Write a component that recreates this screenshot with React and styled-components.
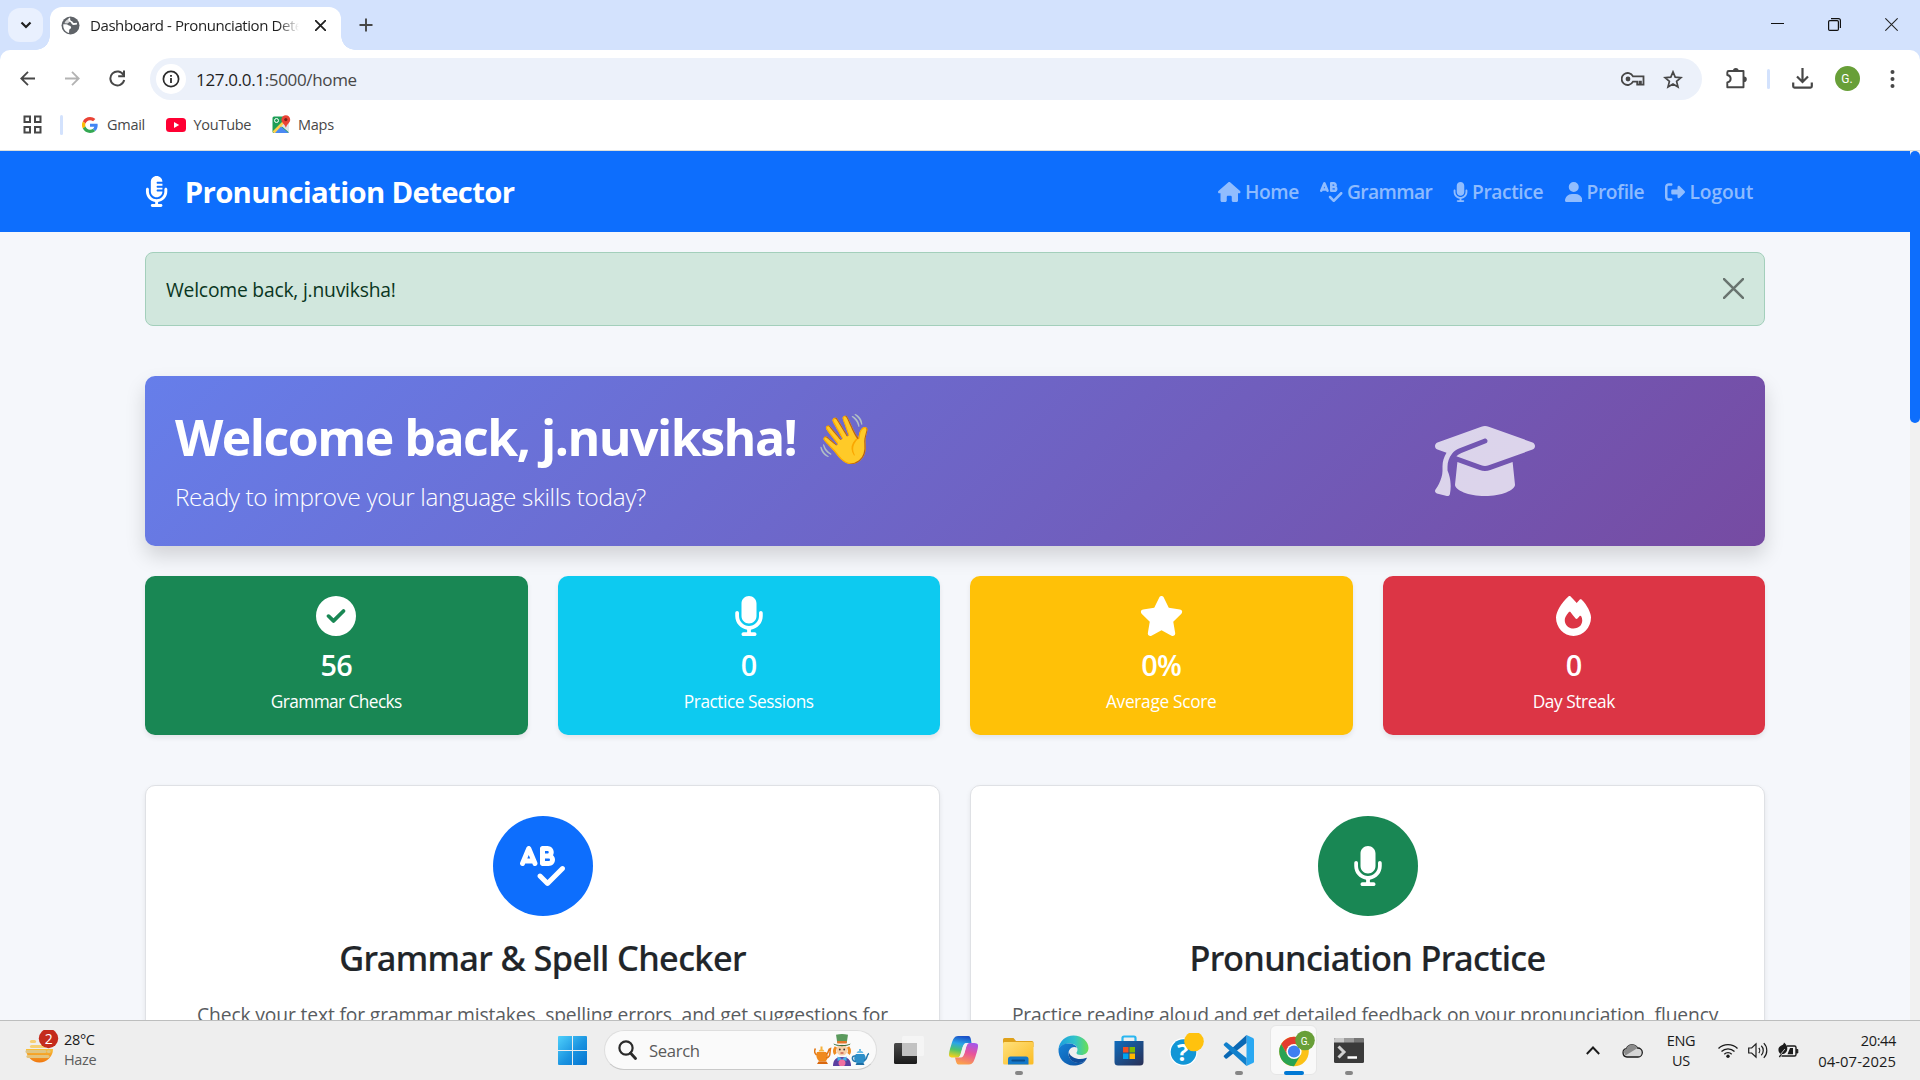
import React from "react";
import styled, { createGlobalStyle, css } from "styled-components";
import {
  FaMicrophoneLines,
  FaHouse,
  FaSpellCheck,
  FaMicrophone,
  FaUser,
  FaRightFromBracket,
  FaGraduationCap,
  FaCircleCheck,
  FaStar,
  FaFire,
} from "react-icons/fa6";

const GlobalStyle = createGlobalStyle`
  *, *::before, *::after { box-sizing: border-box; }
  body { margin: 0; overflow: hidden; background: #fff; }
  svg { display: block; flex: none; }
  h1, h2, h3, p { margin: 0; }
`;

const sans = `"Open Sans", "Noto Sans", sans-serif`;
const medium = `"Noto Sans", "Open Sans", sans-serif`;

const Screen = styled.div`
  width: 1920px;
  height: 1080px;
  display: flex;
  flex-direction: column;
  overflow: hidden;
  font-family: ${sans};
  white-space: nowrap;
`;

/* Font Awesome glyphs keep their own width: $ratio is glyph width over height. */
const Glyph = styled.span`
  flex: none;
  svg {
    height: ${(p) => p.$size}px;
    width: ${(p) => p.$size * (p.$ratio || 1)}px;
  }
`;

/* ---------- browser frame ---------- */

const TabStrip = styled.div`
  height: 50px;
  flex: none;
  display: flex;
  align-items: flex-start;
  padding-left: 8px;
  background: #d3e2fd;
`;

const TabSearch = styled.div`
  width: 35px;
  height: 34px;
  margin-top: 8px;
  border-radius: 12px;
  background: #e9f0fe;
  display: grid;
  place-items: center;
`;

const Tab = styled.div`
  position: relative;
  width: 291px;
  height: 43px;
  margin: 7px 0 0 7px;
  padding: 0 14px 7px 11px;
  display: flex;
  align-items: center;
  background: #fff;
  border-radius: 12px 12px 0 0;

  &::before,
  &::after {
    content: "";
    position: absolute;
    bottom: 0;
    width: 14px;
    height: 14px;
  }
  &::before {
    left: -14px;
    background: radial-gradient(circle at 0 0, transparent 13.5px, #fff 14px);
  }
  &::after {
    right: -14px;
    background: radial-gradient(circle at 100% 0, transparent 13.5px, #fff 14px);
  }
`;

const TabTitle = styled.div`
  width: 209px;
  margin: 0 16px 0 10px;
  overflow: hidden;
  font-size: 15px;
  line-height: 22px;
  letter-spacing: -0.42px;
  color: #1f1f1f;
  mask-image: linear-gradient(to right, #000 188px, transparent 209px);
`;

const NewTab = styled.div`
  margin: 18px 0 0 18px;
`;

const WindowButtons = styled.div`
  margin-left: auto;
  display: flex;
  padding-top: 18px;
  gap: 44px;
  padding-right: 22px;
`;

const ToolbarWrap = styled.div`
  background: #d3e2fd;
  flex: none;
`;

const Toolbar = styled.div`
  height: 58px;
  display: flex;
  align-items: center;
  padding: 0 20px 1px;
  background: #fff;
  border-radius: 10px 10px 0 0;
`;

const NavButtons = styled.div`
  display: flex;
  align-items: center;
  gap: 29.5px;
  width: 130px;
`;

const Omnibox = styled.div`
  width: 1552px;
  height: 42px;
  margin-top: 1px;
  padding: 0 19px 0 6px;
  display: flex;
  align-items: center;
  border-radius: 21px;
  background: #ecf1fa;
`;

const SiteInfo = styled.div`
  width: 30px;
  height: 30px;
  border-radius: 50%;
  background: #fff;
  display: grid;
  place-items: center;
`;

const Url = styled.div`
  flex: 1;
  margin-left: 10px;
  padding-top: 2px;
  font-size: 17px;
  line-height: 24px;
  letter-spacing: -0.34px;
  color: #474747;
  b {
    font-weight: 400;
    color: #1f1f1f;
  }
`;

const OmniActions = styled.div`
  display: flex;
  align-items: center;
  gap: 18px;
`;

const ToolActions = styled.div`
  display: flex;
  align-items: center;
  margin-left: 23.5px;
`;

const Divider = styled.div`
  width: 2.5px;
  height: 20px;
  border-radius: 2px;
  background: #d3e2fd;
  margin: ${(p) => p.$margin};
`;

const Avatar = styled.div`
  width: 25px;
  height: 25px;
  margin: 0 30px 0 22px;
  border-radius: 50%;
  background: #689f38;
  color: #fff;
  display: grid;
  place-items: center;
  font: 12px Roboto, sans-serif;
`;

const Bookmarks = styled.div`
  height: 43px;
  flex: none;
  display: flex;
  align-items: center;
  padding: 0 0 9px 23px;
  background: #fff;
  border-bottom: 1px solid #dcdfdc;
`;

const Bookmark = styled.div`
  display: flex;
  align-items: center;
  gap: ${(p) => p.$gap || 8}px;
  width: ${(p) => p.$width}px;
  font-size: 14.5px;
  line-height: 20px;
  letter-spacing: -0.27px;
  color: #474747;
`;

/* ---------- page ---------- */

const Viewport = styled.div`
  height: 869px;
  flex: none;
  display: flex;
  overflow: hidden;
  background: #f5f7fb;
`;

const Page = styled.div`
  width: 1910px;
  height: 869px;
  overflow: hidden;
`;

const ScrollTrack = styled.div`
  width: 10px;
  height: 869px;
  background: #f1f1f1;
`;

const ScrollThumb = styled.div`
  height: 272px;
  border-radius: 5px;
  background: #0d6efd;
`;

const NavBar = styled.header`
  height: 81px;
  padding: 0 145px;
  display: flex;
  align-items: center;
  justify-content: space-between;
  background: #0d6efd;
`;

const Brand = styled.div`
  display: flex;
  align-items: center;
  gap: 16.500px;
  color: #fff;
  font-size: 29.3px;
  font-weight: 700;
  letter-spacing: -0.66px;
`;

const NavLinks = styled.nav`
  display: flex;
`;

const NavLink = styled.a`
  width: ${(p) => p.$width}px;
  display: flex;
  align-items: center;
  gap: 4.500px;
  color: rgba(255, 255, 255, 0.55);
  font-size: 19.2px;
  font-weight: 600;
  letter-spacing: ${(p) => p.$track || -0.4}px;
`;

const Container = styled.main`
  width: 1620px;
  margin-left: 145px;
  padding-top: 20px;
`;

const Alert = styled.div`
  height: 74px;
  padding: 0 20px;
  display: flex;
  align-items: center;
  justify-content: space-between;
  border: 1px solid #a3cfbb;
  border-radius: 8px;
  background: #d1e7dd;
  color: #0a3622;
  font-size: 19.3px;
  letter-spacing: -0.21px;
`;

const Dismiss = styled.span`
  padding-bottom: 2px;
`;

const Hero = styled.section`
  height: 170px;
  margin-top: 50px;
  padding: 30px;
  display: flex;
  justify-content: space-between;
  border-radius: 10px;
  color: #fff;
  background: linear-gradient(135deg, #667eea 0%, #764ba2 100%);
  box-shadow: 0 10px 20px rgba(0, 0, 0, 0.15);
`;

const HeroTitle = styled.h1`
  height: 60px;
  margin-top: 1px;
  display: flex;
  align-items: center;
  font-size: 50px;
  line-height: 60px;
  font-weight: 700;
  letter-spacing: -1.52px;
`;

const Wave = styled.span`
  margin-left: 19px;
  font-size: 48.500px;
  font-weight: 400;
  letter-spacing: 0;
`;

const HeroText = styled.p`
  margin-top: 11px;
  font-size: 24.3px;
  line-height: 37px;
  font-weight: 300;
  letter-spacing: -0.34px;
`;

const HeroIcon = styled.div`
  width: 500px;
  display: flex;
  align-items: center;
  justify-content: center;
  opacity: 0.75;
`;

const StatGrid = styled.section`
  margin-top: 30px;
  display: grid;
  grid-template-columns: repeat(4, 1fr);
  gap: 30px;
`;

const StatCard = styled.div`
  height: 159px;
  padding-top: 20px;
  display: flex;
  flex-direction: column;
  align-items: center;
  border-radius: 10px;
  color: #fff;
  background: ${(p) => p.$color};
  box-shadow: 0 2.5px 5px rgba(0, 0, 0, 0.075);
`;

const StatValue = styled.h3`
  margin-top: 11px;
  font-size: 28.8px;
  line-height: 36px;
  font-weight: 600;
  letter-spacing: -0.6px;
`;

const StatLabel = styled.div`
  margin-top: 4px;
  font-size: 17.3px;
  line-height: 30px;
  letter-spacing: ${(p) => p.$track}px;
`;

const FeatureGrid = styled.section`
  margin-top: 50px;
  display: grid;
  grid-template-columns: 1fr 1fr;
  gap: 30px;
`;

const FeatureCard = styled.article`
  height: 330px;
  padding-top: 30px;
  display: flex;
  flex-direction: column;
  align-items: center;
  border: 1px solid #dfe1e5;
  border-radius: 10px;
  background: #fff;
  box-shadow: 0 2.5px 5px rgba(0, 0, 0, 0.075);
`;

const FeatureBadge = styled.div`
  width: 100px;
  height: 100px;
  border-radius: 50%;
  display: grid;
  place-items: center;
  color: #fff;
  background: ${(p) => p.$color};
`;

const FeatureTitle = styled.h2`
  margin-top: 21px;
  font-family: ${medium};
  font-size: 34.3px;
  line-height: 42px;
  font-weight: 500;
  letter-spacing: -0.62px;
  color: #212529;
  -webkit-text-stroke: 0.2px #212529;
`;

const FeatureText = styled.p`
  margin-top: 21px;
  font-size: 19.3px;
  line-height: 30px;
  letter-spacing: -0.15px;
  color: #595c5f;
`;

/* ---------- taskbar ---------- */

const Taskbar = styled.footer`
  height: 60px;
  flex: none;
  display: flex;
  border-top: 1px solid #bdbebe;
  background: #eeeeee;
  color: #1b1b1b;
  font-size: 14.5px;
  letter-spacing: -0.35px;
`;

const Weather = styled.div`
  width: 545px;
  padding: 9px 0 0 24px;
  display: flex;
  gap: 5px;
`;

const WeatherText = styled.div`
  line-height: 20px;
  span {
    display: block;
    color: #5d5d5d;
  }
`;

const TaskSlot = styled.div`
  position: relative;
  width: 55px;
  height: 59px;
  display: grid;
  place-items: center;

  ${(p) =>
    p.$active &&
    css`
      &::before {
        content: "";
        position: absolute;
        inset: 4px 4px 5px;
        border-radius: 6px;
        background: #f9f9f9;
        border: 1px solid #e6e6e6;
      }
    `}

  ${(p) =>
    p.$mark &&
    css`
      &::after {
        content: "";
        position: absolute;
        bottom: 5px;
        left: calc(50% - ${p.$mark / 2}px);
        width: ${p.$mark}px;
        height: 4px;
        border-radius: 2px;
        background: ${p.$active ? "#0078d4" : "#868686"};
      }
    `}

  svg {
    position: relative;
  }
`;

const SearchPill = styled.div`
  width: 273px;
  height: 40px;
  margin: 9px 4px 0;
  padding: 0 6px 0 13px;
  display: flex;
  align-items: center;
  border-radius: 20px;
  border: 1px solid #dedede;
  border-bottom-color: #c9c9c9;
  background: #fafafa;
  color: #5a5a5a;
  font-size: 16.7px;
  span {
    flex: 1;
    margin-left: 12px;
  }
`;

const Tray = styled.div`
  margin-left: auto;
  display: flex;
  align-items: center;
  padding-right: 24px;
`;

const Language = styled.div`
  width: 34px;
  margin: 0 20px 0 21px;
  line-height: 20px;
  text-align: center;
`;

const Clock = styled.div`
  width: 80px;
  margin-left: 17px;
  line-height: 20px;
  text-align: right;
  div + div {
    font-size: 14.800px;
    letter-spacing: 0.05px;
  }
`;

const TrayGap = styled.div`
  width: ${(p) => p.$width}px;
`;

/* ---------- drawings ---------- */

const ChevronDown = () => (
  <svg width="12" height="8" viewBox="0 0 12 8" fill="none" stroke="#1f1f1f" strokeWidth="2.2">
    <path d="M1.5 1.5 6 6l4.500-4.500" />
  </svg>
);

const Globe = () => (
  <svg width="19" height="19" viewBox="0 0 19 19">
    <circle cx="9.500" cy="9.500" r="9" fill="#5f6368" />
    <path
      d="M9 2.200c-1.500 1-.8 2.800.8 3.300 1.600.4 1 2.300 2.800 2.500 1.200.1 2.200-.5 3.300-.2"
      fill="none"
      stroke="#fff"
      strokeWidth="1.800"
    />
    <path
      d="M2.300 8.300c2.300-.3 4.400-.1 5.500 1.200 1.400.2 2.600.9 2.300 2.300-.3 1.200-1.800 1-1.900 2.400l-.2 2.700C4.400 16.200 1.900 12.800 2.300 8.300z"
      fill="#fff"
    />
    <path d="M3.400 7.200C4.300 4.600 6.200 3 8.300 2.400c-.8 1.400-.4 2.700.6 3.300L6.500 7.600z" fill="#fff" opacity=".75" />
  </svg>
);

const Cross = ({ size, color, width }) => (
  <svg width={size} height={size} viewBox="0 0 10 10" stroke={color} strokeWidth={width} strokeLinecap="round">
    <path d="M.5.5l9 9M9.500.5l-9 9" />
  </svg>
);

const Plus = () => (
  <svg width="14" height="14" viewBox="0 0 14 14" stroke="#474747" strokeWidth="1.900">
    <path d="M7 .5v13M.5 7h13" />
  </svg>
);

const Minimize = () => (
  <svg width="13" height="13" viewBox="0 0 13 13" stroke="#111" strokeWidth="1">
    <path d="M0 5.500h13" />
  </svg>
);

const Restore = () => (
  <svg width="13" height="13" viewBox="0 0 13 13" fill="none" stroke="#111" strokeWidth="1.200">
    <rect x=".6" y="2.600" width="9.800" height="9.800" rx="1.200" />
    <path d="M3 .7h7.500c1 0 1.900.8 1.900 1.900V10" />
  </svg>
);

const Arrow = ({ color, flip }) => (
  <svg width="15" height="15" viewBox="0 0 15 15" fill="none" stroke={color} strokeWidth="1.800">
    <path d={flip ? "M0 7.500h13.500M7 .8l6.700 6.700L7 14.200" : "M15 7.500H1.500M8 .8 1.300 7.500 8 14.200"} />
  </svg>
);

const Reload = () => (
  <svg width="17" height="17" viewBox="0 0 17 17" fill="none" stroke="#474747" strokeWidth="2">
    <path d="M14.600 5.200A7 7 0 1 0 15.200 10" />
    <path d="M15 .5v5.800H9.200" />
  </svg>
);

const Info = () => (
  <svg width="18" height="18" viewBox="0 0 18 18">
    <circle cx="9" cy="9" r="7.600" fill="none" stroke="#2c2c2c" strokeWidth="1.700" />
    <path d="M8.100 8h1.800v5H8.100zM8.100 5h1.800v1.800H8.100z" fill="#2c2c2c" />
  </svg>
);

const KeyIcon = () => (
  <svg width="24" height="14" viewBox="0 0 24 14" fill="none" stroke="#474747" strokeWidth="1.800">
    <path d="M12 4.300A6 6 0 1 0 12 9.700h4.200v3h2.300v-3h1.400v3h2.600V4.300z" />
    <circle cx="7" cy="7" r="2.400" fill="#474747" stroke="none" />
  </svg>
);

const StarOutline = () => (
  <svg width="20" height="19" viewBox="0 0 20 19" fill="none" stroke="#474747" strokeWidth="1.700">
    <path d="M10 1.900l2.200 5.300 5.800.4-4.400 3.800 1.400 5.600-5-3-5 3 1.400-5.600L2 7.600l5.800-.4z" />
  </svg>
);

const Puzzle = () => (
  <svg width="22" height="21" viewBox="0 0 22 21">
    <path
      d="M2.800 3h14.700v16.200H1.300v-4.800c4.500-.8 4.500-6.600 0-7.400V4.500c0-.9.600-1.500 1.500-1.500z"
      fill="none"
      stroke="#474747"
      strokeWidth="1.900"
      strokeLinejoin="round"
    />
    <path d="M7 2.500a2.800 2.500 0 0 1 5.600 0zM18 8.500a2.800 2.800 0 0 1 0 5.600z" fill="#474747" />
  </svg>
);

const Download = () => (
  <svg width="21" height="21" viewBox="0 0 21 21" fill="none" stroke="#474747" strokeWidth="2.200">
    <path d="M10.500 0v13.500M5 8.500l5.500 5.500L16 8.500M1.200 14.500v3.800c0 .8.500 1.300 1.300 1.300h16c.8 0 1.300-.5 1.300-1.300v-3.800" />
  </svg>
);

const Dots = () => (
  <svg width="5" height="18" viewBox="0 0 5 18" fill="#474747">
    <circle cx="2.500" cy="2" r="2" />
    <circle cx="2.500" cy="9" r="2" />
    <circle cx="2.500" cy="16" r="2" />
  </svg>
);

const AppsGrid = () => (
  <svg width="19" height="19" viewBox="0 0 19 19" fill="none" stroke="#474747" strokeWidth="2">
    <path d="M1.500 1.500h5.500V7H1.500zM12 1.500h5.500V7H12zM1.500 12h5.500v5.500H1.500zM12 12h5.500v5.500H12z" />
  </svg>
);

const GoogleG = () => (
  <svg width="16" height="16" viewBox="0 0 48 48">
    <path fill="#ea4335" d="M24 9.500c3.500 0 6.700 1.200 9.200 3.600l6.900-6.900C35.900 2.400 30.500 0 24 0 14.600 0 6.500 5.400 2.600 13.200l8 6.200C12.400 13.700 17.700 9.500 24 9.500z" />
    <path fill="#4285f4" d="M47 24.600c0-1.600-.2-3.100-.4-4.600H24v9h12.900c-.6 3-2.300 5.500-4.800 7.200l7.700 6C44.400 38 47 31.800 47 24.600z" />
    <path fill="#fbbc05" d="M10.500 28.600a14.500 14.500 0 0 1 0-9.200l-8-6.200a24 24 0 0 0 0 21.600z" />
    <path fill="#34a853" d="M24 48c6.500 0 11.900-2.100 15.900-5.800l-7.700-6c-2.200 1.500-4.900 2.300-8.200 2.300-6.300 0-11.600-4.200-13.500-9.900l-8 6.200C6.500 42.600 14.600 48 24 48z" />
  </svg>
);

const YouTube = () => (
  <svg width="20" height="14" viewBox="0 0 20 14">
    <rect width="20" height="14" rx="3.500" fill="#ff0033" />
    <path d="M8 4v6l5.200-3z" fill="#fff" />
  </svg>
);

const MapsIcon = () => (
  <svg width="19" height="19" viewBox="0 0 19 19">
    <rect x=".5" y="1.500" width="16.500" height="16.500" rx="1.500" fill="#1e9e57" />
    <path d="M.5 16.500 15 2h2v3L4 18H2z" fill="#ffd04b" />
    <path d="M3 18l6-6.500 7.500 6.500z" fill="#4a89f3" />
    <path d="M9.500 11 17 4v13.500z" fill="#dfe3e8" />
    <circle cx="4.500" cy="5.500" r="2" fill="none" stroke="#fff" strokeWidth="1" />
    <path d="M13.800.3a4.400 4.400 0 0 1 4.400 4.400c0 3-3.200 4-4.300 8-1.200-4-4.500-5-4.500-8A4.400 4.400 0 0 1 13.800.3z" fill="#ea4335" />
    <circle cx="13.800" cy="4.600" r="1.600" fill="#7d1f1a" />
  </svg>
);

const WeatherIcon = () => (
  <svg width="35" height="38" viewBox="0 0 35 38">
    <defs>
      <linearGradient id="sun" x1="0" y1="0" x2="0" y2="1">
        <stop offset="0" stopColor="#f8c13a" />
        <stop offset="1" stopColor="#f0760f" />
      </linearGradient>
    </defs>
    <path d="M2 19a13.500 13.500 0 0 0 27 0z" fill="url(#sun)" />
    <g stroke="#f6cf73" strokeWidth="3.200" strokeLinecap="round">
      <path d="M7.500 11.500h3" />
      <path d="M7.500 16.500h13" />
      <path d="M3 21.500h18M24.500 21.500h.5" stroke="#dfc583" />
      <path d="M4 26.500h20" stroke="#e5c47c" />
    </g>
    <circle cx="24.500" cy="8.500" r="9.700" fill="#c42b1c" />
    <text x="24.500" y="13.500" textAnchor="middle" fontFamily="Open Sans" fontSize="14" fill="#fff">
      2
    </text>
  </svg>
);

const WindowsLogo = () => (
  <svg width="29" height="29" viewBox="0 0 29 29">
    <defs>
      <linearGradient id="win" x1="0" y1="0" x2="1" y2="1">
        <stop offset="0" stopColor="#4fd0fb" />
        <stop offset=".55" stopColor="#1a93e0" />
        <stop offset="1" stopColor="#0473d0" />
      </linearGradient>
    </defs>
    <path
      d="M1 0h13v14H0V1q0-1 1-1zM15 0h13q1 0 1 1v13H15zM0 15h14v14H1q-1 0-1-1zM15 15h14v13q0 1-1 1H15z"
      fill="url(#win)"
    />
  </svg>
);

const Lens = () => (
  <svg width="19" height="20" viewBox="0 0 19 20" fill="none" stroke="#2a2a2a" strokeWidth="2.200">
    <circle cx="8" cy="8" r="6.600" />
    <path d="M12.500 13l5 5.500" strokeWidth="2.800" strokeLinecap="round" />
  </svg>
);

const HatterArt = () => (
  <svg width="56" height="32" viewBox="0 0 56 32">
    <path d="M3 18h9c2.500 2.500 2.500 6.500-.5 9.500h-6C2.500 25 1.500 21 3 18z" fill="#f08a1d" />
    <path d="M12 20c3.500 0 1-5 4.500-5.500-1 4 .5 9-4.500 9.500M2.500 21c-3-3-2-5-1-6.500" fill="none" stroke="#e37612" strokeWidth="1.500" />
    <path d="M4.500 17.500c1-3.500 5-3.500 6 0zM6.500 12.500h2v2.500h-2z" fill="#f7b23b" />
    <path d="M4.500 27.500h8l1.500 2.500H3z" fill="#d9680f" />
    <path d="M22 13c-2 3-2 5-.5 7M34 13c2 3 2 5 .5 7" stroke="#ee8b20" strokeWidth="3" fill="none" />
    <circle cx="28" cy="16" r="5.600" fill="#f6cfa8" />
    <path d="M22 .8c4-1 8-1 12 0L32.700 9h-9.400z" fill="#5b9a5d" />
    <path d="M23.100 7h9.800l-.3 2.500h-9.200z" fill="#e5772b" />
    <path d="M19.500 9.500c4 2 13 2 17 0 0 3.500-17 3.500-17 0z" fill="#376b3c" />
    <circle cx="25.800" cy="15.500" r=".9" fill="#333" />
    <circle cx="30.200" cy="15.500" r=".9" fill="#333" />
    <path d="M26.500 19h3" stroke="#c0392b" strokeWidth="1.100" />
    <path d="M19 32c0-6 3-9 9-9s9 3 9 9z" fill="#5a3fa0" />
    <path d="M23.500 22.500l4.500 2.500 4.500-2.500v4.500L28 25.500l-4.500 1.500z" fill="#45b4e8" />
    <circle cx="28" cy="29" r="3.500" fill="#f06fa0" />
    <path d="M42 20h8c2.500 2.500 2 7-.8 9h-6.400c-3-2-3.600-6-.8-9z" fill="#2d8fc9" />
    <path d="M50 26.500c4-1 2-6 5-7M41.500 22c-4-1-4.500 5 .5 5.500" fill="none" stroke="#2478ae" strokeWidth="1.500" />
    <path d="M42.500 19c1-3 6-3 7 0zM45 15h2v2h-2z" fill="#69bbe6" />
    <path d="M42.500 29h7l1 2h-9z" fill="#1f6ea3" />
  </svg>
);

const TaskView = () => (
  <svg width="30" height="30" viewBox="0 1 30 30">
    <defs>
      <linearGradient id="tv" x1="0" y1="0" x2="0" y2="1">
        <stop offset="0" stopColor="#4a4a4a" />
        <stop offset="1" stopColor="#1b1b1b" />
      </linearGradient>
    </defs>
    <rect x="0" y="8" width="23" height="21" rx="1.500" fill="url(#tv)" />
    <rect x="8" y="1" width="22" height="20" rx="1.500" fill="#f5f5f5" />
    <path d="M8 8h15v13H9.500Q8 21 8 19.500z" fill="#c2c2c2" />
  </svg>
);

const Copilot = () => (
  <svg width="31" height="29" viewBox="0 0 31 29">
    <defs>
      <linearGradient id="cp1" x1="0.500" y1="0" x2="0.300" y2="1">
        <stop offset="0" stopColor="#1b52c8" />
        <stop offset=".35" stopColor="#2aa5e8" />
        <stop offset=".65" stopColor="#4ec46c" />
        <stop offset="1" stopColor="#f6d21b" />
      </linearGradient>
      <linearGradient id="cp2" x1="0.700" y1="0" x2="0.400" y2="1">
        <stop offset="0" stopColor="#a457ea" />
        <stop offset=".45" stopColor="#e8539b" />
        <stop offset="1" stopColor="#fba14b" />
      </linearGradient>
    </defs>
    <path d="M20.500 0H10C6.500 0 5 3 3.500 8S0 19 1.500 20.500C3 22 7 21.500 9.500 21.500 12 21.500 12.500 18 14 13s2.500-6 4.500-6h5C23 3 22.500 0 20.500 0z" fill="url(#cp1)" />
    <path d="M10.500 28.500H21c3.500 0 5-3 6.500-8S31 9.500 29.500 8C28 6.500 24 7 21.500 7 19 7 18.500 10.500 17 15.500s-2.500 6-4.500 6H7C8 25.500 8.500 28.500 10.500 28.500z" fill="url(#cp2)" />
    <path d="M17.500 7.500c-2 .5-2.500 3-3.500 6.500s-1.500 6-2.800 7h1.800c2.500-.5 3-3 4-6.500s1.500-6 3-7z" fill="#f3f0f2" />
  </svg>
);

const Folder = () => (
  <svg width="31" height="28" viewBox="0 0 31 28">
    <defs>
      <linearGradient id="fd" x1="0" y1="0" x2="1" y2="1">
        <stop offset="0" stopColor="#ffe17c" />
        <stop offset="1" stopColor="#fbbb23" />
      </linearGradient>
    </defs>
    <path d="M0 10V2.500Q0 1 1.500 1h9L13 4h16q1.500 0 1.500 1.500V10z" fill="#dfa11a" />
    <rect y="5" width="30.500" height="22.500" rx="1.500" fill="url(#fd)" />
    <path d="M5 27.500V22q0-2.500 2.500-2.500H23q2.500 0 2.500 2.500v5.500z" fill="#1478c8" />
    <path d="M9.500 23.500h11.500" stroke="#0b4f8d" strokeWidth="2.200" strokeLinecap="round" />
  </svg>
);

const Edge = () => (
  <svg width="31" height="31" viewBox="0 0 31 31">
    <defs>
      <linearGradient id="eg1" x1="0" y1="0.300" x2="1" y2="0.300">
        <stop offset="0" stopColor="#1c9de0" />
        <stop offset=".55" stopColor="#31c3c9" />
        <stop offset="1" stopColor="#6bdf52" />
      </linearGradient>
      <linearGradient id="eg2" x1="0" y1="0" x2="1" y2="1">
        <stop offset="0" stopColor="#1683d8" />
        <stop offset="1" stopColor="#0c4fa0" />
      </linearGradient>
    </defs>
    <path d="M.5 14C1.500 6 7.500.5 15.500.5 24 .5 30.500 6.500 30.500 13c0 4.500-3.500 7-7.500 7-3 0-4.500-1-4.500-2s1-1.500 1-3.500c0-3-3-6-7.500-6C6 8.500 2 11 .5 14z" fill="url(#eg1)" />
    <path d="M.5 14C2 10.500 6 8.500 11.500 8.500c3.500 0 6.500 1.700 7.500 4-5-2-8.500 1.500-8.500 6 0 5.500 5 9.500 10 9.500 3.500 0 6-1.500 7.500-3-2.500 3.800-7 5.500-12.500 5.500C6 30.500 0 22.500.5 14z" fill="url(#eg2)" />
    <path d="M10.800 17c-1 7 4.500 11.500 10 11 3.500 0 6.500-2 7.800-4.300.4-.8-.2-1-.7-.8-6 2.500-15 1-17.100-5.900z" fill="#0f4d9c" />
  </svg>
);

const Store = () => (
  <svg width="30" height="31" viewBox="0 0 30 31">
    <defs>
      <linearGradient id="st" x1="0" y1="0" x2="1" y2="1">
        <stop offset="0" stopColor="#0f6cbd" />
        <stop offset="1" stopColor="#2a2f55" />
      </linearGradient>
    </defs>
    <path d="M8.500 7V3q0-1.500 1.500-1.500h10q1.500 0 1.500 1.500v4" fill="none" stroke="#29b6f0" strokeWidth="2.200" />
    <path d="M.5 6h29v21q0 3.500-3.500 3.500H4Q.5 30.500.5 27z" fill="url(#st)" />
    <path d="M9 12h5.500v5.500H9z" fill="#f25022" />
    <path d="M15.500 12H21v5.500h-5.500z" fill="#7fba00" />
    <path d="M9 18.500h5.500V24H9z" fill="#00a4ef" />
    <path d="M15.500 18.500H21V24h-5.500z" fill="#ffb900" />
  </svg>
);

const HelpIcon = () => (
  <svg width="43" height="36" viewBox="-7 0 43 36">
    <circle cx="14.500" cy="19" r="14" fill="#fff" />
    <circle cx="14.500" cy="19" r="12.800" fill="#1296d6" />
    <text x="13.500" y="28" textAnchor="middle" fontFamily="Open Sans" fontWeight="700" fontSize="24" fill="#fff">
      ?
    </text>
    <circle cx="25" cy="8.500" r="9.800" fill="#ffc20e" />
  </svg>
);

const VsCode = () => (
  <svg width="31" height="31" viewBox="-.5 0 31 31">
    <path d="M23 0l6.500 3q1 .5 1 1.500v22q0 1-1 1.500L23 31z" fill="#2aa8f2" />
    <path d="M23 0v8L3.500 23.500q-.8.500-1.500 0L.5 22q-.8-.8 0-1.600z" fill="#0a68b4" />
    <path d="M23 31v-8L3.500 7.500q-.8-.5-1.500 0L.5 9q-.8.800 0 1.600z" fill="#1180cc" />
  </svg>
);

const Chrome = () => (
  <svg width="42" height="42" viewBox="-1.500 1 42 42">
    <circle cx="19.500" cy="22.500" r="14.800" fill="#fbc116" />
    <path d="M6.700 15.100A14.800 14.800 0 0 1 32.300 15.100H19.500L13 26z" fill="#e33b2e" />
    <path d="M6.700 15.100A14.800 14.800 0 0 0 19.500 37.300L26 26.200H13.100z" fill="#29a352" />
    <circle cx="19.500" cy="22.500" r="7.600" fill="#fff" />
    <circle cx="19.500" cy="22.500" r="6.100" fill="#3f7ff0" />
    <circle cx="30.500" cy="11.500" r="9.800" fill="#689f38" />
    <text x="30.500" y="15.500" textAnchor="middle" fontFamily="Roboto" fontSize="10" fill="#fff">
      G.
    </text>
  </svg>
);

const Terminal = () => (
  <svg width="30" height="25" viewBox="0 0 30 25">
    <rect width="30" height="25" rx="1.500" fill="#3a3a3a" />
    <path d="M1.500 0H10v4.500H0v-3Q0 0 1.500 0z" fill="#c9c9c9" />
    <path d="M10 0h10v4.500H10z" fill="#9b9b9b" />
    <path d="M20 0h8.500Q30 0 30 1.500v3H20z" fill="#757575" />
    <path d="M4.500 8.500l5.500 5.500-5.500 5.500" fill="none" stroke="#d0d0d0" strokeWidth="3" />
    <path d="M13.500 19.500H23" stroke="#fff" strokeWidth="2.500" />
  </svg>
);

const ChevronUp = () => (
  <svg width="14" height="9" viewBox="0 0 14 9" fill="none" stroke="#1b1b1b" strokeWidth="1.900">
    <path d="M.8 8 7 1.500 13.200 8" />
  </svg>
);

const Cloud = () => (
  <svg width="21" height="15" viewBox="0 0 21 15">
    <path d="M5 14a4.200 4.200 0 0 1-.6-8.300A6.200 6.200 0 0 1 15.600 5 4.500 4.500 0 0 1 16 14z" fill="#d6d6d6" stroke="#1b1b1b" strokeWidth="1.300" />
    <path d="M1.500 8.500A4.200 4.200 0 0 1 4.400 5.700 6.200 6.200 0 0 1 15.600 5L3.500 12.500z" fill="#8b8b8b" />
  </svg>
);

const Wifi = () => (
  <svg width="20" height="15" viewBox="0 0 20 15" fill="none" stroke="#1b1b1b" strokeWidth="1.300">
    <path d="M.5 5.500a13.400 13.400 0 0 1 19 0M3.500 8.500a9.200 9.200 0 0 1 13 0M6.300 11.200a5.300 5.300 0 0 1 7.400 0" />
    <circle cx="10" cy="13.200" r="1.700" fill="#1b1b1b" stroke="none" />
  </svg>
);

const Sound = () => (
  <svg width="20" height="17" viewBox="0 0 20 17" fill="none" stroke="#1b1b1b" strokeWidth="1.200">
    <path d="M.7 6h3L8 1.800v13.400L3.700 11h-3z" />
    <path d="M10.800 6c1.200 1.300 1.200 3.700 0 5M13.300 3.800c2.600 2.500 2.600 6.900 0 9.400M15.800 1.200c4 4 4 10.600 0 14.600" />
  </svg>
);

const Battery = () => (
  <svg width="21" height="17" viewBox="0 0 21 17">
    <path d="M9 4h7.500q1.500 0 1.500 1.500v7q0 1.500-1.500 1.500h-13" fill="none" stroke="#1b1b1b" strokeWidth="1.400" />
    <path d="M18.500 7.500h1.300v3.500h-1.300z" fill="#1b1b1b" stroke="#1b1b1b" />
    <path d="M12 6h3v6.200H9.500z" fill="#1b1b1b" />
    <path d="M6 .5c1.500 1.500 3.300 2.500 3.300 6 0 3.500-2.300 5.500-5.300 5.500L2 15.500l-1.200-.8L2.500 12C-.5 9 0 5.500 2.500 4 4.500 3 5.700 2.500 6 .5z" fill="#1b1b1b" />
    <path d="M2.500 12.500 6.800 7" stroke="#eee" strokeWidth=".8" />
  </svg>
);

const stats = [
  { color: "#198754", Icon: FaCircleCheck, ratio: 1, value: "56", label: "Grammar Checks", track: -0.58 },
  { color: "#0dcaf0", Icon: FaMicrophone, ratio: 0.75, value: "0", label: "Practice Sessions", track: -0.46 },
  { color: "#ffc107", Icon: FaStar, ratio: 1.125, value: "0%", label: "Average Score", track: -0.3 },
  { color: "#dc3545", Icon: FaFire, ratio: 0.875, value: "0", label: "Day Streak", track: -0.42 },
];

const links = [
  { Icon: FaHouse, ratio: 1.125, label: "Home", width: 102 },
  { Icon: FaSpellCheck, ratio: 1.125, label: "Grammar", width: 132.5, track: -0.6 },
  { Icon: FaMicrophone, ratio: 0.75, label: "Practice", width: 112 },
  { Icon: FaUser, ratio: 0.875, label: "Profile", width: 100.5 },
  { Icon: FaRightFromBracket, ratio: 1, label: "Logout", width: 100, track: -0.1 },
];

const features = [
  {
    color: "#0d6efd",
    Icon: FaSpellCheck,
    ratio: 1.125,
    title: "Grammar & Spell Checker",
    text: "Check your text for grammar mistakes, spelling errors, and get suggestions for",
  },
  {
    color: "#198754",
    Icon: FaMicrophone,
    ratio: 0.75,
    title: "Pronunciation Practice",
    text: "Practice reading aloud and get detailed feedback on your pronunciation, fluency,",
  },
];

export default function App() {
  return (
    <Screen>
      <GlobalStyle />
      <TabStrip>
        <TabSearch>
          <ChevronDown />
        </TabSearch>
        <Tab>
          <Globe />
          <TabTitle>Dashboard - Pronunciation Detector</TabTitle>
          <Cross size={11} color="#1f1f1f" width={1.6} />
        </Tab>
        <NewTab>
          <Plus />
        </NewTab>
        <WindowButtons>
          <Minimize />
          <Restore />
          <Cross size={13} color="#222" width={0.8} />
        </WindowButtons>
      </TabStrip>
      <ToolbarWrap>
        <Toolbar>
          <NavButtons>
            <Arrow color="#474747" />
            <Arrow color="#b3b3b3" flip />
            <Reload />
          </NavButtons>
          <Omnibox>
            <SiteInfo>
              <Info />
            </SiteInfo>
            <Url>
              <b>127.0.0.1</b>:5000/home
            </Url>
            <OmniActions>
              <KeyIcon />
              <StarOutline />
            </OmniActions>
          </Omnibox>
          <ToolActions>
            <Puzzle />
            <Divider $margin="0 22px 0 19.5px" />
            <Download />
            <Avatar>G.</Avatar>
            <Dots />
          </ToolActions>
        </Toolbar>
      </ToolbarWrap>
      <Bookmarks>
        <AppsGrid />
        <Divider $margin="0 19px 0 18px" />
        <Bookmark $width={84} $gap={9.5}>
          <GoogleG />
          Gmail
        </Bookmark>
        <Bookmark $width={106}>
          <YouTube />
          YouTube
        </Bookmark>
        <Bookmark $width={80} $gap={7.5}>
          <MapsIcon />
          Maps
        </Bookmark>
      </Bookmarks>

      <Viewport>
        <Page>
          <NavBar>
            <Brand>
              <Glyph $size={31} $ratio={0.75}>
                <FaMicrophoneLines />
              </Glyph>
              Pronunciation Detector
            </Brand>
            <NavLinks>
              {links.map(({ Icon, ratio, label, width, track }) => (
                <NavLink key={label} $width={width} $track={track}>
                  <Glyph $size={20} $ratio={ratio}>
                    <Icon />
                  </Glyph>
                  {label}
                </NavLink>
              ))}
            </NavLinks>
          </NavBar>
          <Container>
            <Alert>
              Welcome back, j.nuviksha!
              <Dismiss>
                <Cross size={21} color="#69746f" width={1.2} />
              </Dismiss>
            </Alert>
            <Hero>
              <div>
                <HeroTitle>
                  Welcome back, j.nuviksha!<Wave>👋</Wave>
                </HeroTitle>
                <HeroText>Ready to improve your language skills today?</HeroText>
              </div>
              <HeroIcon>
                <Glyph $size={80} $ratio={1.25}>
                  <FaGraduationCap />
                </Glyph>
              </HeroIcon>
            </Hero>
            <StatGrid>
              {stats.map(({ color, Icon, ratio, value, label, track }) => (
                <StatCard key={label} $color={color}>
                  <Glyph $size={40} $ratio={ratio}>
                    <Icon />
                  </Glyph>
                  <StatValue>{value}</StatValue>
                  <StatLabel $track={track}>{label}</StatLabel>
                </StatCard>
              ))}
            </StatGrid>
            <FeatureGrid>
              {features.map(({ color, Icon, ratio, title, text }) => (
                <FeatureCard key={title}>
                  <FeatureBadge $color={color}>
                    <Glyph $size={40} $ratio={ratio}>
                      <Icon />
                    </Glyph>
                  </FeatureBadge>
                  <FeatureTitle>{title}</FeatureTitle>
                  <FeatureText>{text}</FeatureText>
                </FeatureCard>
              ))}
            </FeatureGrid>
          </Container>
        </Page>
        <ScrollTrack>
          <ScrollThumb />
        </ScrollTrack>
      </Viewport>

      <Taskbar>
        <Weather>
          <WeatherIcon />
          <WeatherText>
            28°C
            <span>Haze</span>
          </WeatherText>
        </Weather>
        <TaskSlot>
          <WindowsLogo />
        </TaskSlot>
        <SearchPill>
          <Lens />
          <span>Search</span>
          <HatterArt />
        </SearchPill>
        <TaskSlot>
          <TaskView />
        </TaskSlot>
        <TaskSlot>
          <Copilot />
        </TaskSlot>
        <TaskSlot $mark={8}>
          <Folder />
        </TaskSlot>
        <TaskSlot>
          <Edge />
        </TaskSlot>
        <TaskSlot>
          <Store />
        </TaskSlot>
        <TaskSlot>
          <HelpIcon />
        </TaskSlot>
        <TaskSlot $mark={8}>
          <VsCode />
        </TaskSlot>
        <TaskSlot $active $mark={20}>
          <Chrome />
        </TaskSlot>
        <TaskSlot $mark={8}>
          <Terminal />
        </TaskSlot>
        <Tray>
          <ChevronUp />
          <TrayGap $width={22} />
          <Cloud />
          <Language>
            <div>ENG</div>
            <div>US</div>
          </Language>
          <Wifi />
          <TrayGap $width={10} />
          <Sound />
          <TrayGap $width={10} />
          <Battery />
          <Clock>
            <div>20:44</div>
            <div>04-07-2025</div>
          </Clock>
        </Tray>
      </Taskbar>
    </Screen>
  );
}
